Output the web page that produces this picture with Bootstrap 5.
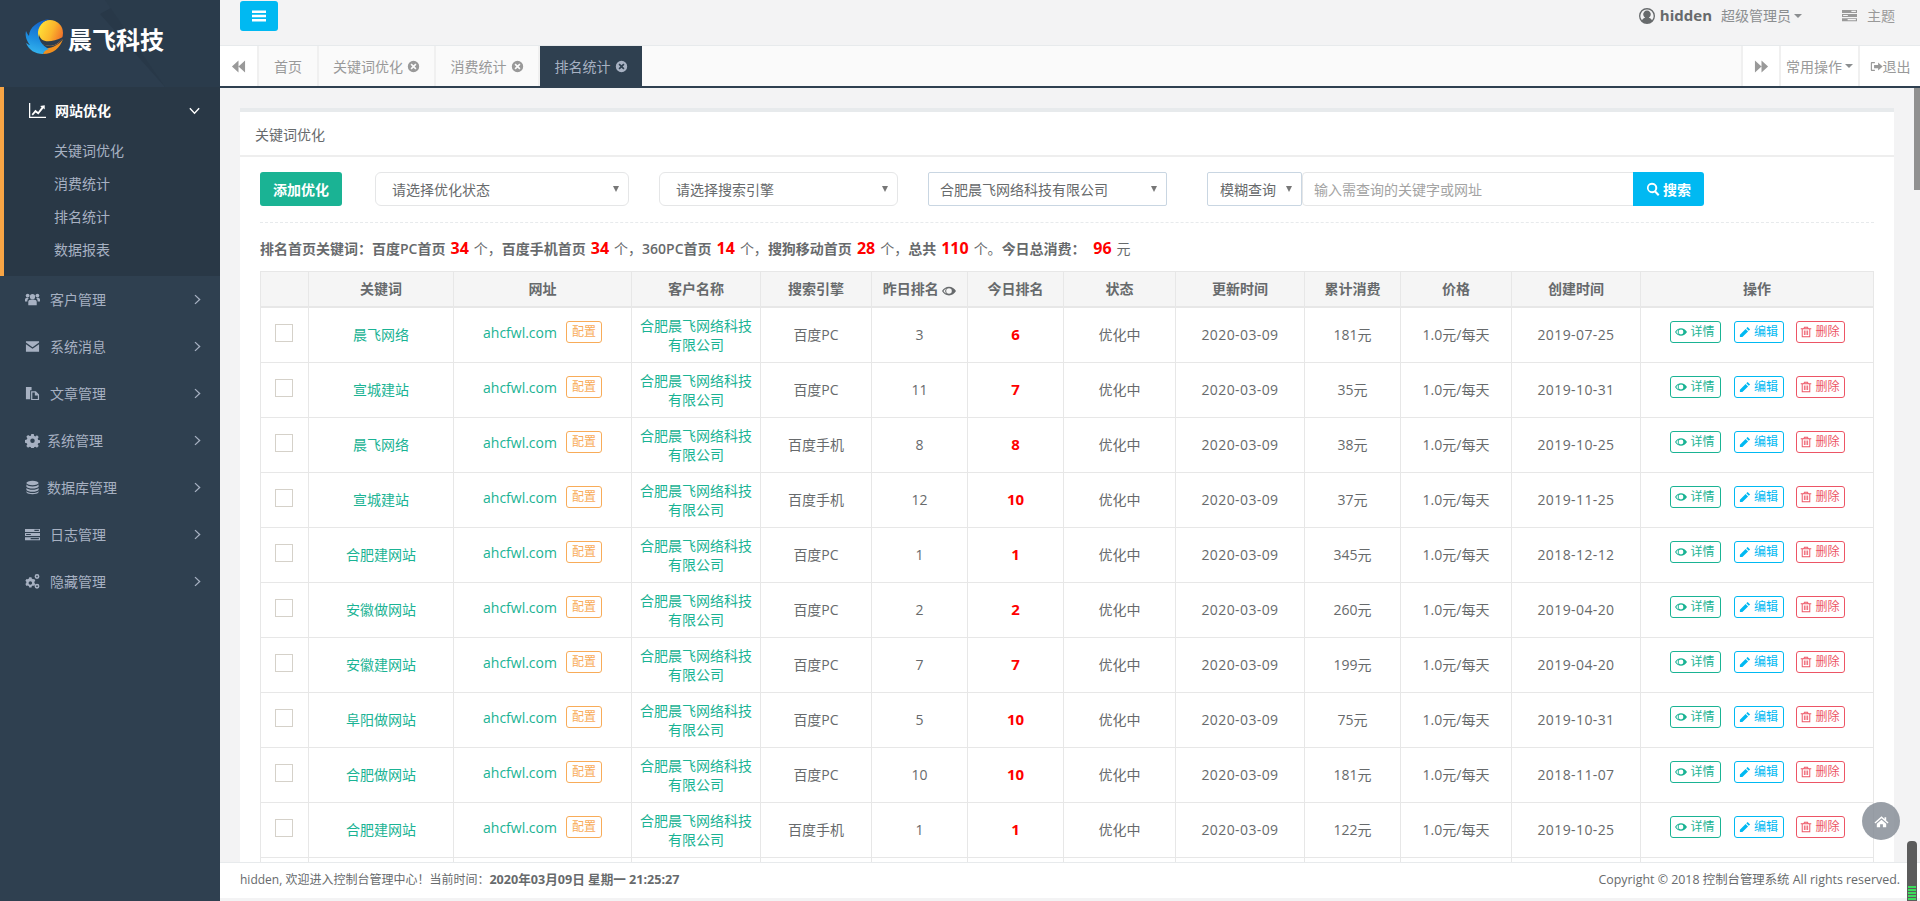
<!DOCTYPE html>
<html lang="zh-CN">
<head>
  <meta charset="UTF-8">
  <meta name="viewport" content="width=device-width, initial-scale=1.0">
  <title>排名统计</title>

  <link rel="stylesheet" href="https://cdn.jsdelivr.net/npm/bootstrap@5.3.0/dist/css/bootstrap.min.css">

  <style>
    html, body { height: 100%; overflow: hidden; }
    body {
      font-family: "Open Sans", "Noto Sans CJK SC", sans-serif;
      font-size: 14px;
      color: #676a6c;
      background: #f3f3f4;
    }
    .ico { width: 1em; height: 1em; fill: currentColor; flex: none; }

    /* Sidebar */
    .side-bar { width: 220px; flex: none; background: #2f4050; height: 100vh; }
    .logo-box { height: 87px; background: #283848; position: relative; overflow: hidden; }
    .logo-facets { position: absolute; left: 0; top: 0; }
    .logo-mark { position: absolute; left: 25px; top: 18px; }
    .logo-text { position: absolute; left: 68px; top: 21px; font-size: 24px; line-height: 36px; font-weight: 700; color: #fff; font-family: "Noto Sans CJK SC", sans-serif; }
    .menu-open { background: #293846; border-left: 4px solid #f8a545; height: 189px; padding-top: 2px; }
    .menu-head { height: 42px; display: flex; align-items: center; padding: 0 20px 0 25px; color: #fff; font-weight: 700; text-decoration: none; }
    .menu-head .ico { font-size: 17px; margin-right: 9px; }
    .menu-head .ang { margin-left: auto; font-size: 11px; margin-right: 0; }
    .sub-link { display: block; height: 33px; line-height: 33px; padding: 0 0 0 50px; color: #a7b1c2; text-decoration: none; }
    .menu-first { margin-top: 3px; }
    .side-link { height: 47px; display: flex; align-items: center; padding: 0 17px 0 25px; color: #a7b1c2; text-decoration: none; }
    .side-link .ico { font-size: 15px; margin-right: 10px; }
    .side-link .ang { margin-left: auto; margin-right: 0; font-size: 11px; }
    .side-link.tight .ico { margin-right: 7px; }
    .side-link.tight .ang { margin-right: 0; }

    /* Top bars */
    .main-col { min-width: 0; height: 100vh; }
    .top-line { height: 46px; border-bottom: 1px solid #e7eaec; padding: 0 25px 14px 20px; flex: none; }
    .menu-btn { width: 38px; height: 30px; padding: 0; border-radius: 3px; border: 0; background: #00b9f2; color: #fff; display: flex; align-items: center; justify-content: center; }
    .user-ico { font-size: 16px; margin-right: 5px; color: #676a6c; }
    .user-name { font-weight: 700; font-size: 15px; margin-right: 9px; }
    .role-name { color: #8b8e90; }
    .caret-dn { display: inline-block; border-top: 4px solid #8b8e90; border-left: 4px solid transparent; border-right: 4px solid transparent; margin-left: 3px; }
    .theme-ico { font-size: 15px; margin: 0 10px 0 40px; color: #999; }
    .theme-name { color: #999; }
    .tab-line { height: 42px; background: #fafafa; border-bottom: 2px solid #2f4050; flex: none; color: #999; }
    .tab-cell { height: 40px; display: flex; align-items: center; justify-content: center; background: #fff; border-right: 2px solid #f0f0f0; color: #999; text-decoration: none; flex: none; }
    .tab-back { width: 39px; }
    .tab-back .ico, .tab-fwd .ico { font-size: 15px; }
    .tab-item { background: #fafafa; gap: 4px; }
    .tab-item .ico { font-size: 13px; }
    .tab-keyword { width: 117px; }
    .tab-cost { width: 104px; }
    .tab-now { width: 102px; background: #2f4050; color: #a7b1c2; border-right: 0; }
    .tab-home { width: 60px; background: #fafafa; }
    .tab-fwd { width: 40px; border-left: 2px solid #f0f0f0; border-right: 2px solid #f0f0f0; margin-left: auto; }
    .tab-ops { width: 79px; border-right: 2px solid #f0f0f0; }
    .tab-exit { width: 60px; border: 0; }
    .tab-exit .ico { font-size: 13px; }

    /* Panel */
    .scroll-box { flex: 1 1 0; min-height: 0; overflow: hidden; position: relative; padding: 20px 26px 0 20px; }
    .rank-panel { background: #fff; border-top: 4px solid #e7eaec; border-radius: 0; }
    .panel-head { height: 45px; line-height: 46px; padding-left: 15px; border-bottom: 2px solid #eeeeee; }
    .panel-body { padding: 15px 20px 0; }
    .filter-row { height: 35px; padding-bottom: 0; }
    .add-btn { width: 82px; height: 34px; padding: 0; background: #1ab394; border: 0; color: #fff; font-weight: 700; border-radius: 3px; font-size: 14px; }
    .add-btn:hover { background: #18a689; color: #fff; }
    .pick {
      height: 34px; font-size: 14px; color: #676a6c; border: 1px solid #e5e6e7; padding: 0 24px 0 16px;
      background-image: url("data:image/svg+xml,%3Csvg xmlns='http://www.w3.org/2000/svg' viewBox='0 0 8 8'%3E%3Cpath fill='%23777' d='M1 1h6L4 7z'/%3E%3C/svg%3E");
      background-size: 8px 8px; background-position: right 8px center; box-shadow: none;
    }
    .pick-state { width: 254px; margin-left: 33px; border-radius: 6px; }
    .pick-engine { width: 239px; margin-left: 30px; border-radius: 6px; }
    .pick-company { width: 239px; margin-left: 30px; border-radius: 2px; border-color: #c9d6e2; padding-left: 11px; }
    .search-group { width: 497px; margin-left: 40px; flex-wrap: nowrap; }
    .search-group .pick-mode { width: 95px !important; flex: none !important; border-radius: 2px !important; border-color: #c9d6e2; padding-left: 12px; padding-right: 16px; }
    .search-input { height: 34px; font-size: 14px; border: 1px solid #e5e6e7; border-radius: 4px 0 0 4px !important; padding-left: 11px; margin-left: 0 !important; color: #676a6c; }
    .search-input::placeholder { color: #a3a3a3; }
    .search-btn { width: 71px; flex: none; height: 34px; padding: 0; background: #00b9f2; border: 0; color: #fff; font-weight: 700; font-size: 14px; border-radius: 0 3px 3px 0 !important; display: flex; align-items: center; justify-content: center; gap: 3px; }
    .stat-line { border-top: 1px dashed #e7eaec; margin-top: 15px; padding-top: 15px; height: 49px; line-height: 20px; font-weight: 600; white-space: nowrap; }
    .stat-line b { color: #f00; font-size: 16px; font-weight: 700; margin: 0 5px; }
    .stat-line i { font-style: normal; font-weight: 400; }

    /* Rank table */
    .rank-table { table-layout: fixed; width: 1613px; margin: 0; color: #676a6c; --bs-table-color: #676a6c; --bs-border-color: #e7e7e7; border-color: #e7e7e7; }
    .rank-table th { height: 35px; padding: 0; background: #f5f5f5; text-align: center; vertical-align: middle; font-weight: 600; border-bottom: 2px solid #e7e7e7; }
    .rank-table td { height: 55px; padding: 8px 6px; text-align: center; vertical-align: middle; line-height: 19px; border-color: #e7e7e7; }
    .rank-table .top-cell { vertical-align: top; padding-top: 13px; }
    .kw-link { color: #1ab394; text-decoration: none; }
    .rank-hot { color: #f00; font-weight: 700; font-size: 15px; }
    .date-text { letter-spacing: .4px; }
    .check-box { display: block; width: 18px; height: 18px; margin: 3px 0 0 8px; background: #fff; border: 1px solid #d5d1c9; }
    .url-cell { line-height: 24px !important; white-space: nowrap; }
    .mini-btn { display: inline-flex; align-items: center; justify-content: center; gap: 3px; height: 22px; padding: 0; font-size: 12px; line-height: 20px; background: #fff; border-radius: 3px; border: 1px solid; vertical-align: top; }
    .mini-btn .ico { font-size: 12px; }
    .cfg-btn { width: 36px; color: #f8ac59; border-color: #f8ac59; margin-left: 9px; }
    .look-btn { width: 51px; color: #1ab394; border-color: #1ab394; }
    .edit-btn { width: 50px; color: #00b9f2; border-color: #00b9f2; margin-left: 13px; }
    .del-btn { width: 49px; color: #ed5565; border-color: #ed5565; margin-left: 12px; }

    /* Bottom bar and overlays */
    .foot-bar { height: 36px; flex: none; background: #fff; border-top: 1px solid #e7eaec; padding: 0 20px; font-size: 12px; margin-bottom: 3px; position: relative; }
    .foot-bar b { font-weight: 700; font-size: 12.6px; }
    .foot-copy { font-size: 12.4px; }
    .thumb-bar { position: absolute; right: 0; top: 0; width: 6px; height: 102px; background: #909090; }
    .home-float { position: absolute; left: 1862px; top: 802px; width: 38px; height: 38px; border-radius: 50%; background: rgba(130, 138, 148, .82); color: #fff; display: flex; align-items: center; justify-content: center; font-size: 15px; }
    .meter-float { position: absolute; left: 1907px; top: 841px; width: 10px; height: 60px; border-radius: 4px 4px 0 0; background: #5c5c5c; }
    .meter-float span { position: absolute; left: 1px; right: 1px; bottom: 0; height: 15px; background: repeating-linear-gradient(#3ddc5c 0 2px, #5c5c5c 2px 3px); }
  </style>
</head>

<body>
<!-- Icon set used all over the page -->
<svg width="0" height="0" class="position-absolute">
  <defs>
    <linearGradient id="sunFill" x1="0" y1=".3" x2="1" y2=".7"><stop offset="0" stop-color="#ffe53a"/><stop offset=".55" stop-color="#fbb52b"/><stop offset="1" stop-color="#ef6a2a"/></linearGradient>
    <linearGradient id="wingFill" x1=".6" y1="0" x2=".4" y2="1"><stop offset="0" stop-color="#1560c8"/><stop offset=".6" stop-color="#1d8fe0"/><stop offset="1" stop-color="#35b5ee"/></linearGradient>
    <symbol id="i-bars" viewBox="0 0 16 16"><path d="M1 2.500h14v2.400H1zM1 6.800h14v2.400H1zM1 11.100h14v2.400H1z"/></symbol>
    <symbol id="i-chart" viewBox="0 0 16 16"><path d="M0 1h1.200v12.800H16V15H0z"/><path d="M2.500 11.500l3.500-4.200 2.600 2 3.200-4.400-1.300-1.200L14.800 3v4l-1.200-1.200-4.800 6-2.600-2-2.600 3z"/></symbol>
    <symbol id="i-users" viewBox="0 0 16 16"><circle cx="8" cy="5" r="2.800"/><circle cx="2.800" cy="3.800" r="2"/><circle cx="13.200" cy="3.800" r="2"/><path d="M3.500 14V10.500C3.500 8.800 5 8 8 8s4.500.8 4.500 2.500V14zM0 10V8c0-1.500 1-2 3-2l1 1c-1 .5-1.500 1.500-1.500 3zM16 10V8c0-1.500-1-2-3-2l-1 1c1 .5 1.500 1.500 1.500 3z"/></symbol>
    <symbol id="i-mail" viewBox="0 0 16 16"><path d="M1 2.500h14v1.300L8 8.800 1 3.800zM1 5.500l7 5 7-5v8H1z"/></symbol>
    <symbol id="i-files" viewBox="0 0 16 16"><path d="M1 1h6v3.500H5.500V14H1z"/><path fill-rule="evenodd" d="M6.500 5.500h5l3.500 3.500v6H6.500zM7.800 6.800v7h5.900V10H10.500V6.800z"/></symbol>
    <symbol id="i-cog" viewBox="0 0 16 16"><path fill-rule="evenodd" d="M6.700 1h2.600l.4 2 1.300.6 1.800-1.100 1.800 1.800-1.100 1.800.6 1.300 2 .4v2.600l-2 .4-.6 1.300 1.100 1.800-1.800 1.800-1.800-1.100-1.300.6-.4 2H6.700l-.4-2-1.300-.6-1.800 1.100-1.800-1.800 1.100-1.800-.6-1.300-2-.4V7.400l2-.4.6-1.300-1.100-1.800 1.800-1.800 1.800 1.100L6.300 3zM8 5.800a2.400 2.400 0 1 0 0 4.800 2.400 2.400 0 0 0 0-4.800z"/></symbol>
    <symbol id="i-db" viewBox="0 0 16 16"><ellipse cx="8" cy="3.200" rx="6.500" ry="2.400"/><path d="M1.500 4.800c1 1.300 3.500 2 6.500 2s5.500-.7 6.500-2v2.400c-1 1.300-3.500 1.900-6.500 1.900s-5.500-.6-6.500-1.900zM1.500 8.400c1 1.300 3.500 1.900 6.500 1.900s5.500-.6 6.500-1.900v2.300c-1 1.300-3.500 1.900-6.500 1.900s-5.500-.6-6.500-1.900zM1.500 11.900c1 1.300 3.500 1.900 6.500 1.900s5.500-.6 6.500-1.900v1.200c-1 1.500-3.500 2.100-6.500 2.100s-5.500-.6-6.500-2.100z"/></symbol>
    <symbol id="i-tasks" viewBox="0 0 16 16"><path fill-rule="evenodd" d="M0 2h16v3.200H0zM10 3v1.200h4.800V3zM0 6.400h16v3.200H0zM1.200 7.400v1.200h5V7.400zM0 10.800h16V14H0zM6 11.800V13h8.800v-1.200z"/></symbol>
    <symbol id="i-cogs" viewBox="0 0 16 16"><path fill-rule="evenodd" d="M4.500 3.500h2.400l.3 1.400 1.300.8 1.300-.5 1.200 2-1 1 0 1.500 1 1-1.200 2-1.300-.5-1.300.8-.3 1.400H4.500l-.3-1.400-1.300-.8-1.300.5-1.200-2 1-1 0-1.500-1-1 1.200-2 1.300.5 1.300-.8zM5.700 7.600a1.900 1.900 0 1 0 0 3.800 1.900 1.900 0 0 0 0-3.800z"/><path fill-rule="evenodd" d="M12.800 0a2.600 2.600 0 1 1 0 5.200 2.600 2.600 0 0 1 0-5.200zM12.800 1.700a.9.9 0 1 0 0 1.800.9.9 0 0 0 0-1.800zM12.800 10.400a2.600 2.600 0 1 1 0 5.200 2.600 2.600 0 0 1 0-5.200zM12.800 12.100a.9.9 0 1 0 0 1.800.9.9 0 0 0 0-1.800z"/></symbol>
    <symbol id="i-right" viewBox="0 0 16 16"><path d="M5 1l7.500 7L5 15l-1.300-1.300L9.800 8 3.700 2.300z"/></symbol>
    <symbol id="i-down" viewBox="0 0 16 16"><path d="M2 4l6 6.500L14 4l1.500 1.400L8 13.500.5 5.400z"/></symbol>
    <symbol id="i-back" viewBox="0 0 16 16"><path d="M8 1.500v13L1 8zM15 1.500v13L8 8z"/></symbol>
    <symbol id="i-fwd" viewBox="0 0 16 16"><path d="M1 1.500v13L8 8zM8 1.500v13L15 8z"/></symbol>
    <symbol id="i-close" viewBox="0 0 16 16"><path fill-rule="evenodd" d="M8 1a7 7 0 1 1 0 14A7 7 0 0 1 8 1zM5.700 4.300L4.300 5.700 6.600 8l-2.300 2.300 1.400 1.400L8 9.400l2.300 2.300 1.400-1.400L9.400 8l2.300-2.300-1.400-1.400L8 6.600z"/></symbol>
    <symbol id="i-user" viewBox="0 0 16 16"><path fill-rule="evenodd" d="M8 0a8 8 0 1 1 0 16A8 8 0 0 1 8 0zM8 1.500a6.500 6.500 0 0 0-5 10.700c.8-1.400 2-2.200 3.200-2.500a3.800 3.800 0 1 1 3.600 0c1.200.3 2.400 1.100 3.200 2.500A6.500 6.500 0 0 0 8 1.500z"/></symbol>
    <symbol id="i-search" viewBox="0 0 16 16"><path fill-rule="evenodd" d="M6.800.8a6 6 0 0 1 4.800 9.600l3.800 3.800-1.700 1.700-3.800-3.800A6 6 0 1 1 6.800.8zM6.800 3a3.800 3.800 0 1 0 0 7.600 3.800 3.800 0 0 0 0-7.600z"/></symbol>
    <symbol id="i-eye" viewBox="0 0 16 16"><path fill-rule="evenodd" d="M8 3c3.400 0 6.200 2 8 5-1.800 3-4.600 5-8 5s-6.200-2-8-5c1.800-3 4.600-5 8-5zM8 4.800a3.200 3.200 0 1 0 0 6.400 3.200 3.200 0 0 0 0-6.400zM1.600 8c1 1.400 2.200 2.500 3.600 3.200A4.500 4.500 0 0 1 5.200 4.800C3.800 5.500 2.600 6.600 1.600 8z"/></symbol>
    <symbol id="i-pen" viewBox="0 0 16 16"><path d="M11.500 1.200l3.300 3.300-1.800 1.800-3.300-3.300zM8.800 3.900l3.300 3.300-7.600 7.600H1.200v-3.300z"/></symbol>
    <symbol id="i-trash" viewBox="0 0 16 16"><path fill-rule="evenodd" d="M5.500 1h5l.8 2H15v1.300h-1.300V15H2.300V4.300H1V3h3.700zM3.600 4.300v9.400h8.800V4.300zM6.100 2.200l-.3.800h4.400l-.3-.8zM5.200 6h1.200v6H5.200zM7.400 6h1.200v6H7.400zM9.600 6h1.200v6H9.600z"/></symbol>
    <symbol id="i-exit" viewBox="0 0 16 16"><path d="M6 2.500H2.500C1.500 2.500 1 3 1 4v8c0 1 .5 1.500 1.500 1.500H6v-1.400H2.700c-.2 0-.3-.1-.3-.3V4.200c0-.2.100-.3.300-.3H6z"/><path d="M10 3l5.500 5-5.500 5v-3H5V6h5z"/></symbol>
    <symbol id="i-home" viewBox="0 0 16 16"><path d="M8 2.500L.5 9l1 1L8 4.500l6.500 5.500 1-1-2.500-2.200V3.500h-1.800v1.800zM3 10.500l5-4.300 5 4.300V14H9.500v-3h-3v3H3z"/></symbol>
  </defs>
</svg>

<div class="d-flex">
  <!-- Left menu -->
  <aside class="side-bar">
    <div class="logo-box">
      <svg class="logo-facets" width="220" height="87"><path d="M0 0h125L100 14 165 87H0z" fill="#2c3d4e"/><path d="M105 0h115v87h-55z" fill="#2a3b4b"/></svg>
      <svg class="logo-mark" width="38" height="36" viewBox="0 0 38 36">
        <circle cx="25" cy="15" r="13" fill="url(#sunFill)"/>
        <path d="M14 16C15 24 24 26 38 19C32 30 20 30 13 23Z" fill="#2b3c4d"/>
        <path d="M18 36C28 36 35 30 38 21C34 27 26 31 20 30Z" fill="#f0901f"/>
        <path d="M25 1C15 4 11 12 14 20C16 26 20 29 24 31C20 32 19 34 18 36C10 36 4 32 1 25C3 26 4 27 5 27C1 22 0 17 1 13C2 15 3 17 4 18C4 10 13 2 25 1Z" fill="url(#wingFill)"/>
      </svg>
      <div class="logo-text">晨飞科技</div>
    </div>

    <div class="menu-open">
      <a class="menu-head" href="#"><svg class="ico"><use href="#i-chart"/></svg>网站优化<svg class="ico ang"><use href="#i-down"/></svg></a>
      <a class="sub-link menu-first" href="#">关键词优化</a>
      <a class="sub-link" href="#">消费统计</a>
      <a class="sub-link" href="#">排名统计</a>
      <a class="sub-link" href="#">数据报表</a>
    </div>

    <div>
      <a class="side-link" href="#"><svg class="ico"><use href="#i-users"/></svg>客户管理<svg class="ico ang"><use href="#i-right"/></svg></a>
      <a class="side-link" href="#"><svg class="ico"><use href="#i-mail"/></svg>系统消息<svg class="ico ang"><use href="#i-right"/></svg></a>
      <a class="side-link" href="#"><svg class="ico"><use href="#i-files"/></svg>文章管理<svg class="ico ang"><use href="#i-right"/></svg></a>
      <a class="side-link tight" href="#"><svg class="ico"><use href="#i-cog"/></svg>系统管理<svg class="ico ang"><use href="#i-right"/></svg></a>
      <a class="side-link tight" href="#"><svg class="ico"><use href="#i-db"/></svg>数据库管理<svg class="ico ang"><use href="#i-right"/></svg></a>
      <a class="side-link" href="#"><svg class="ico"><use href="#i-tasks"/></svg>日志管理<svg class="ico ang"><use href="#i-right"/></svg></a>
      <a class="side-link" href="#"><svg class="ico"><use href="#i-cogs"/></svg>隐藏管理<svg class="ico ang"><use href="#i-right"/></svg></a>
    </div>
  </aside>

  <div class="main-col flex-grow-1 d-flex flex-column">
    <!-- User line -->
    <div class="top-line d-flex align-items-center">
      <button class="btn menu-btn" type="button"><svg class="ico"><use href="#i-bars"/></svg></button>
      <div class="ms-auto d-flex align-items-center">
        <svg class="ico user-ico"><use href="#i-user"/></svg>
        <span class="user-name">hidden</span>
        <span class="role-name">超级管理员</span><span class="caret-dn"></span>
        <svg class="ico theme-ico"><use href="#i-tasks"/></svg>
        <span class="theme-name">主题</span>
      </div>
    </div>

    <!-- Tabs -->
    <div class="tab-line d-flex">
      <a class="tab-cell tab-back" href="#"><svg class="ico"><use href="#i-back"/></svg></a>
      <a class="tab-cell tab-home" href="#">首页</a>
      <a class="tab-cell tab-item tab-keyword" href="#">关键词优化<svg class="ico"><use href="#i-close"/></svg></a>
      <a class="tab-cell tab-item tab-cost" href="#">消费统计<svg class="ico"><use href="#i-close"/></svg></a>
      <a class="tab-cell tab-item tab-now" href="#">排名统计<svg class="ico"><use href="#i-close"/></svg></a>
      <a class="tab-cell tab-fwd" href="#"><svg class="ico"><use href="#i-fwd"/></svg></a>
      <a class="tab-cell tab-ops" href="#">常用操作<span class="caret-dn"></span></a>
      <a class="tab-cell tab-exit" href="#"><svg class="ico"><use href="#i-exit"/></svg>退出</a>
    </div>

    <!-- Page content -->
    <div class="scroll-box">
      <div class="thumb-bar"></div>
      <div class="rank-panel">
        <div class="panel-head">关键词优化</div>
        <div class="panel-body">
          <div class="filter-row d-flex">
            <button class="btn add-btn" type="button">添加优化</button>
            <select class="form-select pick pick-state"><option>请选择优化状态</option></select>
            <select class="form-select pick pick-engine"><option>请选择搜索引擎</option></select>
            <select class="form-select pick pick-company"><option>合肥晨飞网络科技有限公司</option></select>
            <div class="input-group search-group">
              <select class="form-select pick pick-mode"><option>模糊查询</option></select>
              <input type="text" class="form-control search-input" placeholder="输入需查询的关键字或网址">
              <button class="btn search-btn" type="button"><svg class="ico"><use href="#i-search"/></svg>搜索</button>
            </div>
          </div>

          <div class="stat-line">排名首页关键词：百度PC首页<b>34</b><i>个，</i>百度手机首页<b>34</b><i>个，</i>360PC首页<b>14</b><i>个，</i>搜狗移动首页<b>28</b><i>个，</i>总共<b>110</b><i>个。</i>今日总消费： <b class="ms-1">96</b><i>元</i></div>

          <table class="table table-bordered rank-table">
            <colgroup>
              <col width="48"><col width="145"><col width="178"><col width="129"><col width="111"><col width="96"><col width="96"><col width="112"><col width="129"><col width="96"><col width="111"><col width="129"><col width="233">
            </colgroup>
            <thead>
              <tr>
                <th></th><th>关键词</th><th>网址</th><th>客户名称</th><th>搜索引擎</th>
                <th>昨日排名 <svg class="ico"><use href="#i-eye"/></svg></th>
                <th>今日排名</th><th>状态</th><th>更新时间</th><th>累计消费</th><th>价格</th><th>创建时间</th><th>操作</th>
              </tr>
            </thead>
            <tbody id="rankRows"></tbody>
          </table>
        </div>
      </div>
    </div>

    <!-- Bottom bar -->
    <div class="foot-bar d-flex align-items-center justify-content-between">
      <span>hidden, 欢迎进入控制台管理中心！当前时间：<b>2020年03月09日 星期一 21:25:27</b></span>
      <span class="foot-copy">Copyright © 2018 控制台管理系统 All rights reserved.</span>
    </div>
  </div>
</div>

<div class="home-float"><svg class="ico"><use href="#i-home"/></svg></div>
<div class="meter-float"><span></span></div>

<!-- Filling the table rows from one list -->
<script>
  const rows = [
    ['晨飞网络', '百度PC', 3, 6, '181元', '2019-07-25'],
    ['宣城建站', '百度PC', 11, 7, '35元', '2019-10-31'],
    ['晨飞网络', '百度手机', 8, 8, '38元', '2019-10-25'],
    ['宣城建站', '百度手机', 12, 10, '37元', '2019-11-25'],
    ['合肥建网站', '百度PC', 1, 1, '345元', '2018-12-12'],
    ['安徽做网站', '百度PC', 2, 2, '260元', '2019-04-20'],
    ['安徽建网站', '百度PC', 7, 7, '199元', '2019-04-20'],
    ['阜阳做网站', '百度PC', 5, 10, '75元', '2019-10-31'],
    ['合肥做网站', '百度PC', 10, 10, '181元', '2018-11-07'],
    ['合肥建网站', '百度手机', 1, 1, '122元', '2019-10-25']
  ];

  // The last row sits under the bottom bar, only its top border shows
  document.getElementById('rankRows').innerHTML = rows.map(r => `
    <tr>
      <td class="top-cell"><span class="check-box"></span></td>
      <td><a class="kw-link" href="#">${r[0]}</a></td>
      <td class="top-cell url-cell"><a class="kw-link" href="#">ahcfwl.com</a><button class="mini-btn cfg-btn">配置</button></td>
      <td><a class="kw-link" href="#">合肥晨飞网络科技有限公司</a></td>
      <td>${r[1]}</td>
      <td>${r[2]}</td>
      <td class="rank-hot">${r[3]}</td>
      <td>优化中</td>
      <td class="date-text">2020-03-09</td>
      <td>${r[4]}</td>
      <td>1.0元/每天</td>
      <td class="date-text">${r[5]}</td>
      <td class="top-cell">
        <button class="mini-btn look-btn"><svg class="ico"><use href="#i-eye"/></svg>详情</button><button class="mini-btn edit-btn"><svg class="ico"><use href="#i-pen"/></svg>编辑</button><button class="mini-btn del-btn"><svg class="ico"><use href="#i-trash"/></svg>删除</button>
      </td>
    </tr>`).join('') + '<tr>' + '<td></td>'.repeat(13) + '</tr>';
</script>

<script src="https://cdn.jsdelivr.net/npm/bootstrap@5.3.0/dist/js/bootstrap.bundle.min.js"></script>
</body>
</html>
